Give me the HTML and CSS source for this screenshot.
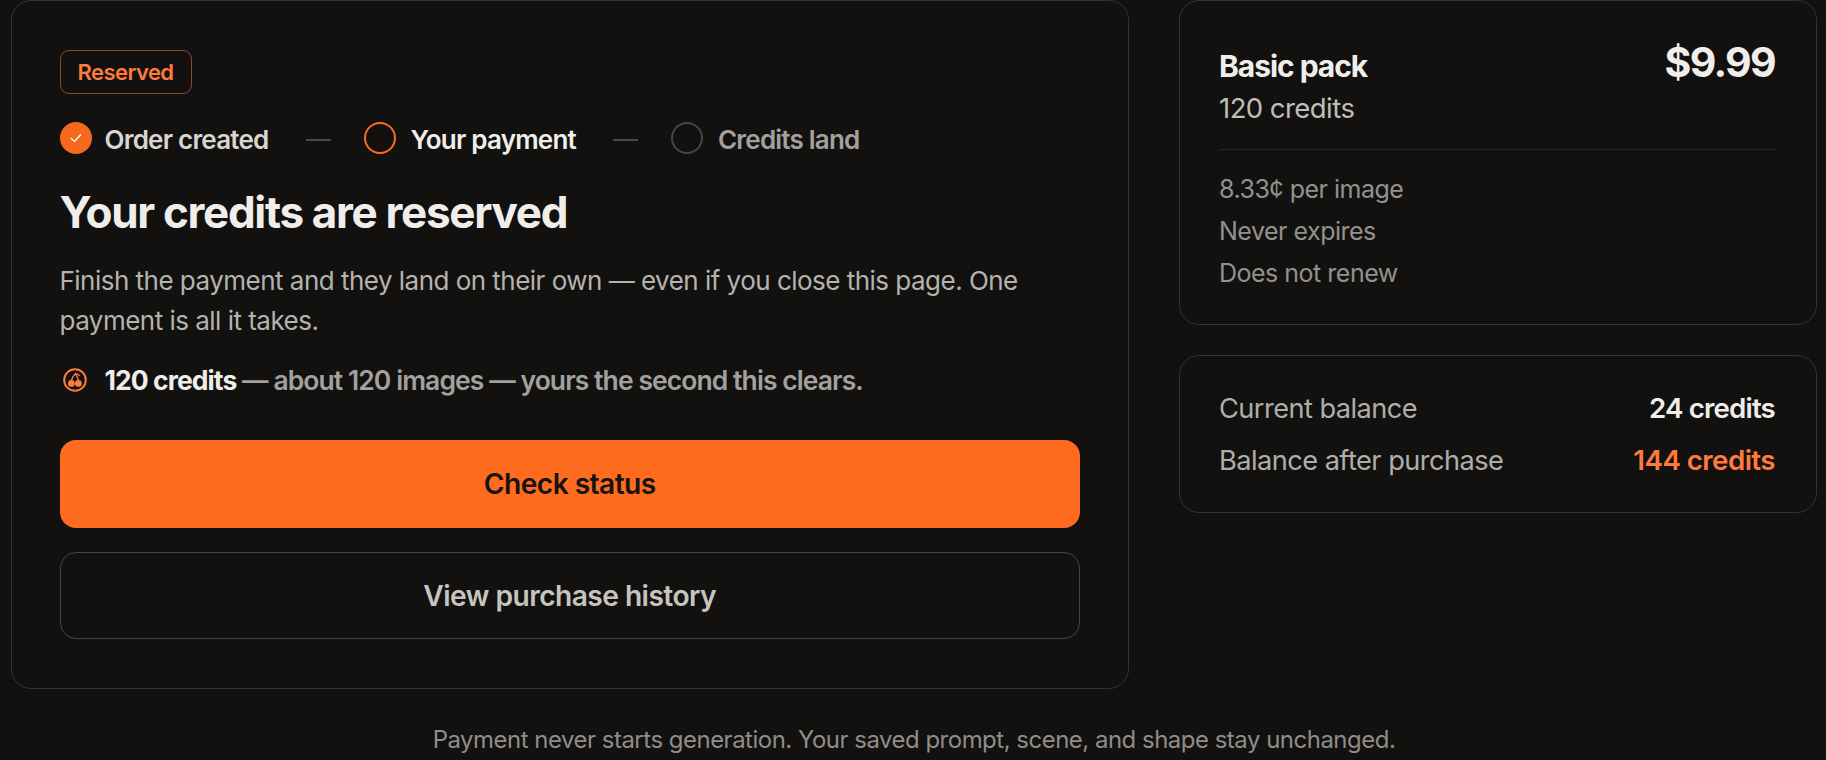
FILE: index.html
```html
<!DOCTYPE html>
<html lang="en">
<head>
<meta charset="utf-8">
<title>Your credits are reserved</title>
<link rel="stylesheet" href="styles.css">
</head>
<body>
<main class="page">
  <div class="columns">
    <section class="card main-card">
      <span class="badge">Reserved</span>
      <ol class="steps">
        <li class="step step-done">
          <span class="dot dot-done">
            <svg viewBox="0 0 16 16" width="16" height="16" fill="none" stroke="#fff" stroke-width="1.4" stroke-linecap="round" stroke-linejoin="round"><path d="M3.4 8.4 6.6 11.4 12.6 4.8"/></svg>
          </span>
          <span>Order created</span>
        </li>
        <li class="sep"></li>
        <li class="step step-current">
          <span class="dot dot-current"></span>
          <span>Your payment</span>
        </li>
        <li class="sep"></li>
        <li class="step step-next">
          <span class="dot dot-next"></span>
          <span>Credits land</span>
        </li>
      </ol>
      <h1 class="title">Your credits are reserved</h1>
      <p class="lead">Finish the payment and they land on their own — even if you close this page. One payment is all it takes.</p>
      <p class="note">
        <svg class="note-icon" viewBox="0 0 24 24" width="24" height="24" fill="none">
          <circle cx="12" cy="12" r="10.8" stroke="#ff7a3d" stroke-width="2"/>
          <circle cx="8.4" cy="15.4" r="3.4" fill="#ff7a3d"/>
          <circle cx="15.4" cy="15.4" r="3.4" fill="#ff7a3d"/>
          <path d="M8.4 12.5C9 9.6 10.4 7.6 12.6 5.6 13.6 8 14.8 10 15.4 12.5M12.6 5.6C14 5.8 15.4 6.4 16.4 7.6" stroke="#ff7a3d" stroke-width="1.4" stroke-linecap="round"/>
        </svg>
        <span class="note-text"><strong>120 credits</strong> — about 120 images — yours the second this clears.</span>
      </p>
      <button class="btn btn-primary" type="button">Check status</button>
      <button class="btn btn-secondary" type="button">View purchase history</button>
    </section>
    <aside class="side">
      <section class="card pack-card">
        <div class="pack-head">
          <div>
            <div class="pack-name">Basic pack</div>
            <div class="pack-credits">120 credits</div>
          </div>
          <div class="pack-price">$9.99</div>
        </div>
        <ul class="pack-facts">
          <li>8.33¢ per image</li>
          <li>Never expires</li>
          <li>Does not renew</li>
        </ul>
      </section>
      <section class="card balance-card">
        <div class="balance-row"><span>Current balance</span><strong>24 credits</strong></div>
        <div class="balance-row"><span>Balance after purchase</span><strong class="accent">144 credits</strong></div>
      </section>
    </aside>
  </div>
  <p class="footnote">Payment never starts generation. Your saved prompt, scene, and shape stay unchanged.</p>
</main>
</body>
</html>
```
FILE: styles.css
```css
* { box-sizing: border-box; }
html, body { margin: 0; height: 760px; overflow: hidden; background: #121110; }
body { font-family: Inter, "Liberation Sans", sans-serif; color: #f0eeea; }
.page { padding: 0 9px 0 11px; }
.columns { display: grid; grid-template-columns: 1118px 638px; gap: 50px; align-items: start; }
.card { border: 1.5px solid #343331; border-radius: 20px; background: #121110; }
.main-card { padding: 49px 48px 49px 47.5px; height: 689px; display: flex; flex-direction: column; align-items: stretch; }
.badge { align-self: flex-start; height: 44px; width: 132px; display: flex; align-items: center; justify-content: center; border: 1.5px solid #8f4a22; border-radius: 9px; color: #ff7a3d; font-size: 22px; font-weight: 600; letter-spacing: -0.025em; }
.steps { list-style: none; margin: 28px 0 0; padding: 0; display: flex; align-items: center; height: 32px; }
.step { display: flex; align-items: center; gap: 15px; font-size: 26px; font-weight: 600; letter-spacing: -0.03em; }
.step-done { color: #d9d6d0; gap: 13px; }
.step-current { color: #f0eeea; }
.step-next { color: #a3a19d; }
.step span:last-child { position: relative; top: 1px; }
.dot { width: 32px; height: 32px; border-radius: 50%; display: flex; align-items: center; justify-content: center; flex: none; }
.dot-done { background: #f4691e; }
.dot-current { border: 2px solid #ff6b1f; }
.dot-next { border: 2px solid #474644; }
.sep { width: 25px; height: 2px; background: #4a4947; margin: 4px 33px 0 37px; }
.title { margin: 32px 0 0; font-size: 44px; line-height: 52px; font-weight: 700; letter-spacing: -0.03em; color: #f0eeea; }
.lead { margin: 23px 0 0; font-size: 26px; line-height: 39.5px; color: #b5b3ae; letter-spacing: -0.02em; }
.note { margin: 20px 0 0; display: flex; align-items: center; gap: 18px; height: 40px; font-size: 26.5px; font-weight: 600; letter-spacing: -0.035em; color: #a3a19d; }
.note-icon { flex: none; margin-left: 3px; }
.note-text strong { color: #f0eeea; font-weight: 700; }
.btn { display: block; width: 100%; font: inherit; font-size: 28.2px; font-weight: 600; letter-spacing: -0.02em; border-radius: 16px; cursor: pointer; }
.btn-primary { margin-top: 40px; height: 88px; background: #ff6b1f; border: 0; color: #161310; }
.btn-secondary { margin-top: 24px; height: 87px; background: transparent; border: 1.5px solid #454442; color: #c6c4bf; }
.side { display: flex; flex-direction: column; gap: 30px; }
.pack-card { height: 325px; padding: 36px 41px 0 39px; }
.pack-head { display: flex; justify-content: space-between; align-items: flex-start; padding-bottom: 23px; border-bottom: 1.5px solid #282725; }
.pack-name { font-size: 30px; line-height: 40px; font-weight: 700; letter-spacing: -0.035em; margin-top: 9px; }
.pack-credits { font-size: 27.5px; line-height: 35px; color: #c0beb9; letter-spacing: -0.02em; margin-top: 5px; }
.pack-price { font-size: 41px; line-height: 46px; font-weight: 700; letter-spacing: -0.04em; margin-top: 2px; }
.pack-facts { list-style: none; margin: 19px 0 0; padding: 0; font-size: 25px; line-height: 41.8px; color: #93918d; letter-spacing: -0.02em; }
.balance-card { height: 158px; padding: 26px 41px 0 39px; }
.balance-row { display: flex; justify-content: space-between; align-items: center; height: 52px; font-size: 27.2px; color: #b0aeaa; letter-spacing: -0.02em; }
.balance-row strong { color: #f0eeea; font-weight: 600; letter-spacing: -0.03em; font-size: 27.7px; }
.balance-row strong.accent { color: #ff7a3d; letter-spacing: -0.02em; }
.footnote { margin: 35px 0 0; text-align: center; font-size: 23.95px; line-height: 32px; color: #8f8d89; letter-spacing: -0.02em; }
```
